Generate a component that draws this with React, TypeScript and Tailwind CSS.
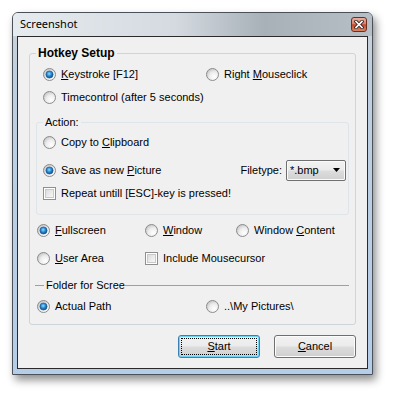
import { useId } from "react";

const font = { fontFamily: '"Liberation Sans", Arial, sans-serif' };

const Radio = ({ checked = false }: { checked?: boolean }) => {
  const id = useId().replace(/:/g, "");
  return (
    <svg width="13" height="13" viewBox="0 0 13 13" className="shrink-0">
      <defs>
        <radialGradient id={`rf${id}`} cx="65%" cy="70%" r="70%">
          <stop offset="0%" stopColor="#ffffff" />
          <stop offset="60%" stopColor="#ececec" />
          <stop offset="100%" stopColor="#c9c9c9" />
        </radialGradient>
        <radialGradient id={`rd${id}`} cx="45%" cy="40%" r="65%">
          <stop offset="0%" stopColor="#8fe2ff" />
          <stop offset="45%" stopColor="#2b8fd6" />
          <stop offset="100%" stopColor="#0b3f78" />
        </radialGradient>
      </defs>
      <circle cx="6.5" cy="6.5" r="6" fill={`url(#rf${id})`} stroke="#8c8c8c" strokeWidth="1" />
      {checked && <circle cx="6.5" cy="6.5" r="3.6" fill={`url(#rd${id})`} stroke="#1a4f8a" strokeWidth="0.6" />}
    </svg>
  );
};

const Check = () => (
  <span className="w-[13px] h-[13px] shrink-0 border border-[#8f8f8f] bg-white p-[1px]">
    <span className="block w-full h-full border border-[#c9c9c9] bg-[linear-gradient(135deg,#dcdcdc,#f8f8f8)]" />
  </span>
);

const Opt = ({
  checked,
  box,
  children,
  className = "",
}: {
  checked?: boolean;
  box?: boolean;
  children: React.ReactNode;
  className?: string;
}) => (
  <div className={`flex items-center gap-[5px] ${className}`}>
    {box ? <Check /> : <Radio checked={checked} />}
    <span className="whitespace-nowrap">{children}</span>
  </div>
);

const Btn = ({ focused, children }: { focused?: boolean; children: React.ReactNode }) => (
  <button
    className={`w-[82px] h-[23px] rounded-[3px] border p-[2px] text-[11px] text-black bg-[linear-gradient(#f2f2f2_0%,#ebebeb_48%,#dddddd_52%,#cfcfcf_100%)] ${
      focused ? "border-[#3c7fb1] shadow-[inset_0_0_0_1px_#6fd3f7]" : "border-[#707070] shadow-[inset_0_0_0_1px_#fcfcfc]"
    }`}
    style={font}
  >
    <span
      className={`flex h-full w-full items-center justify-center ${focused ? "border border-dotted border-black" : ""}`}
    >
      {children}
    </span>
  </button>
);

export default function App() {
  return (
    <div className="w-[394px] h-[396px] bg-white pt-[12px] pl-[12px] text-[11px] text-black" style={font}>
      <div className="w-[361px] h-[363px] flex flex-col border border-[#4b5158] rounded-t-[6px] bg-[linear-gradient(#e3e8ed_0px,#c9d1d9_24px,#bfcfe0_60px,#b5cde8_100%)] shadow-[3px_5px_9px_rgba(0,0,0,0.45)]">
        {/* title bar */}
        <div className="h-[23px] flex items-center justify-between pl-[7px] pr-[5px] bg-[linear-gradient(to_right,#e6ebef_0%,#d4dae0_45%,#a8b0b8_70%,#b6bec6_100%)] rounded-t-[5px]">
          <span className="text-[11px]" style={{ fontFamily: '"Noto Sans", "Open Sans", sans-serif' }}>
            Screenshot
          </span>
          <div className="w-[16px] h-[15px] rounded-[3px] border border-[#6b2e21] bg-[linear-gradient(#eab0a0_0%,#d9806a_45%,#c4482c_52%,#dc8464_100%)] flex items-center justify-center">
            <svg width="10" height="9" viewBox="0 0 10 9">
              <path d="M2 1.5 L8 7.5 M8 1.5 L2 7.5" stroke="#3b2a28" strokeWidth="3.4" strokeLinecap="square" />
              <path d="M2 1.5 L8 7.5 M8 1.5 L2 7.5" stroke="#ffffff" strokeWidth="1.6" strokeLinecap="square" />
            </svg>
          </div>
        </div>

        {/* client area */}
        <div className="flex-1 mx-[4px] mb-[5px] border border-[#2a2a2a] bg-[#f0f0f0] pt-[9px] px-[11px]">
          <fieldset className="border border-[#cdd5da] rounded-[3px] pb-[7px]">
            <legend className="ml-[6px] px-[2px] font-bold text-[12px] leading-[14px]">Hotkey Setup</legend>

            <div className="mt-[3px] h-[22px] flex items-center pl-[13px]">
              <Opt checked className="w-[163px]">
                <u>K</u>eystroke [F12]
              </Opt>
              <Opt>
                Right <u>M</u>ouseclick
              </Opt>
            </div>
            <div className="mt-[1px] h-[22px] flex items-center pl-[13px]">
              <Opt>Timecontrol (after 5 seconds)</Opt>
            </div>

            <fieldset className="mt-[7px] mx-[6px] border border-[#dfe4e8] rounded-[3px] pb-[11px]">
              <legend className="ml-[6px] px-[2px] leading-[14px]">Action:</legend>
              <div className="mt-[2px] h-[22px] flex items-center pl-[6px]">
                <Opt>
                  Copy to <u>C</u>lipboard
                </Opt>
              </div>
              <div className="mt-[5px] h-[24px] flex items-center justify-between pl-[6px] pr-[2px]">
                <Opt checked>
                  Save as new <u>P</u>icture
                </Opt>
                <div className="flex items-center gap-[4px]">
                  <span>Filetype:</span>
                  <div className="w-[60px] h-[21px] rounded-[2px] border border-[#707070] bg-[linear-gradient(#f2f2f2_0%,#ebebeb_48%,#dddddd_52%,#cfcfcf_100%)] shadow-[inset_0_0_0_1px_#fafafa] flex items-center justify-between pl-[3px] pr-[5px]">
                    <span>*.bmp</span>
                    <svg width="7" height="4" viewBox="0 0 7 4">
                      <path d="M0 0 H7 L3.5 4 Z" fill="#000" />
                    </svg>
                  </div>
                </div>
              </div>
              <div className="mt-[1px] h-[20px] flex items-center pl-[6px]">
                <Opt box>Repeat untill [ESC]-key is pressed!</Opt>
              </div>
            </fieldset>

            <div className="mt-[4px] h-[22px] flex items-center pl-[7px]">
              <Opt checked className="w-[108px]">
                <u>F</u>ullscreen
              </Opt>
              <Opt className="w-[91px]">
                <u>W</u>indow
              </Opt>
              <Opt>
                Window <u>C</u>ontent
              </Opt>
            </div>
            <div className="mt-[6px] h-[22px] flex items-center pl-[7px]">
              <Opt className="w-[108px]">
                <u>U</u>ser Area
              </Opt>
              <Opt box>Include Mousecursor</Opt>
            </div>

            <div className="mt-[9px] h-[14px] flex items-center pl-[5px] mr-[6px]">
              <span className="w-[9px] h-px bg-[#a0a0a0]" />
              <span className="pl-[2px] leading-[14px]">Folder for Scree</span>
              <span className="flex-1 h-px bg-[#a0a0a0]" />
            </div>
            <div className="mt-[3px] h-[22px] flex items-center pl-[7px]">
              <Opt checked className="w-[169px]">
                Actual Path
              </Opt>
              <Opt>..\My Pictures\</Opt>
            </div>
          </fieldset>

          <div className="mt-[10px] flex justify-end gap-[14px]">
            <Btn focused>
              <span>
                <u>S</u>tart
              </span>
            </Btn>
            <Btn>
              <span>
                <u>C</u>ancel
              </span>
            </Btn>
          </div>
        </div>
      </div>
    </div>
  );
}
